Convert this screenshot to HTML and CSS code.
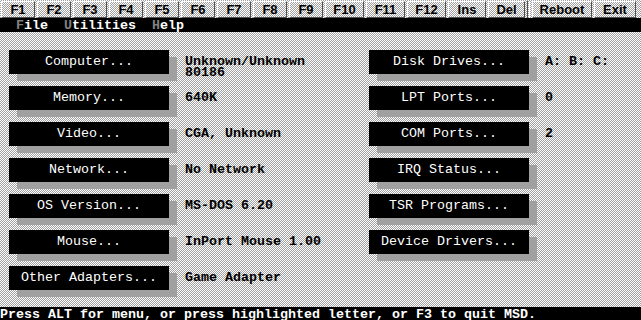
FILE: index.html
```html
<!DOCTYPE html>
<html lang="en">
<head>
  <meta charset="UTF-8">
  <title>Microsoft Diagnostics</title>
  <link rel="stylesheet" href="styles.css">
</head>
<body>
  <div class="fkeys">
    <span class="fkey">F1</span>
    <span class="fkey">F2</span>
    <span class="fkey">F3</span>
    <span class="fkey">F4</span>
    <span class="fkey">F5</span>
    <span class="fkey">F6</span>
    <span class="fkey">F7</span>
    <span class="fkey">F8</span>
    <span class="fkey">F9</span>
    <span class="fkey f-ext">F10</span>
    <span class="fkey f-ext">F11</span>
    <span class="fkey f-ext">F12</span>
    <span class="fkey f-ins">Ins</span>
    <span class="fkey f-del">Del</span>
    <span class="fkey-sep"></span>
    <span class="fkey f-reboot">Reboot</span>
    <span class="fkey f-exit">Exit</span>
  </div>
  <div class="menubar">  <span class="hot">F</span>ile  <span class="hot">U</span>tilities  <span class="hot">H</span>elp</div>

  <div class="panel">
    <div class="col">
      <div class="row"><div class="btn">Computer...</div><div class="val">Unknown/Unknown<br>80186</div></div>
      <div class="row"><div class="btn">Memory...</div><div class="val">640K</div></div>
      <div class="row"><div class="btn">Video...</div><div class="val">CGA, Unknown</div></div>
      <div class="row"><div class="btn">Network...</div><div class="val">No Network</div></div>
      <div class="row"><div class="btn">OS Version...</div><div class="val">MS-DOS 6.20</div></div>
      <div class="row"><div class="btn">Mouse...</div><div class="val">InPort Mouse 1.00</div></div>
      <div class="row"><div class="btn">Other Adapters...</div><div class="val">Game Adapter</div></div>
    </div>
    <div class="col">
      <div class="row"><div class="btn">Disk Drives...</div><div class="val">A: B: C:</div></div>
      <div class="row"><div class="btn">LPT Ports...</div><div class="val">0</div></div>
      <div class="row"><div class="btn">COM Ports...</div><div class="val">2</div></div>
      <div class="row"><div class="btn">IRQ Status...</div><div class="val"></div></div>
      <div class="row"><div class="btn">TSR Programs...</div><div class="val"></div></div>
      <div class="row"><div class="btn">Device Drivers...</div><div class="val"></div></div>
    </div>
  </div>

  <div class="status">Press ALT for menu, or press highlighted letter, or F3 to quit MSD.</div>
</body>
</html>
```

FILE: styles.css
```css
:root {
  --dither-dark: #a0a0a0;
  --dither-light: #fff;
  --shadow: #a0a0a0;
  --hot: #808080;
}
html, body {
  margin: 0;
  padding: 0;
}
body {
  width: 641px;
  height: 320px;
  overflow: hidden;
  display: flex;
  flex-direction: column;
  background-image: repeating-conic-gradient(var(--dither-dark) 0 25%, var(--dither-light) 0 50%);
  background-size: 2px 2px;
  font-family: 'Liberation Mono', 'DejaVu Sans Mono', monospace;
  font-size: 13.333px;
  color: #000;
}

/* function key strip */
.fkeys {
  display: flex;
  gap: 2px;
  height: 18px;
  padding: 1px 0 0 1px;
  box-sizing: border-box;
}
.fkey {
  width: 34px;
  height: 17px;
  box-sizing: border-box;
  border: 1px solid;
  border-color: #fff #505050 #505050 #fff;
  font-family: 'Liberation Sans', Arial, sans-serif;
  font-weight: bold;
  font-size: 13px;
  line-height: 15px;
  text-align: center;
}
.f-ext { width: 39px; }
.f-ins { width: 38px; }
.f-del { width: 37px; }
.f-reboot { width: 60px; }
.f-exit { width: 42px; }
.fkey-sep {
  width: 3px;
  height: 17px;
  box-sizing: border-box;
  border-left: 1px solid #505050;
  border-right: 1px solid #fff;
}

/* menu bar */
.menubar {
  background: #000;
  color: #fff;
  font-weight: bold;
  height: 14px;
  box-sizing: border-box;
  padding-top: 1px;
  line-height: 13px;
  white-space: pre;
}
.menubar .hot {
  color: var(--hot);
}

/* main panel */
.panel {
  flex: 1;
  display: flex;
  padding: 18px 0 0 9px;
}
.col {
  width: 360px;
  flex: none;
  display: flex;
  flex-direction: column;
  gap: 12px;
}
.col + .col {
  width: auto;
  flex: 1;
}
.row {
  display: flex;
  height: 24px;
}
.btn {
  width: 160px;
  height: 24px;
  flex: none;
  background: #000;
  color: #fff;
  text-align: center;
  line-height: 24px;
  box-shadow: 8px 7px 0 var(--shadow);
  white-space: pre;
}
.val {
  margin-left: 16px;
  padding-top: 6px;
  line-height: 11px;
  font-weight: bold;
  white-space: nowrap;
}

/* status line */
.status {
  background: #000;
  color: #fff;
  font-weight: bold;
  height: 13px;
  line-height: 13px;
  padding-top: 1px;
  box-sizing: border-box;
  white-space: pre;
}
```
